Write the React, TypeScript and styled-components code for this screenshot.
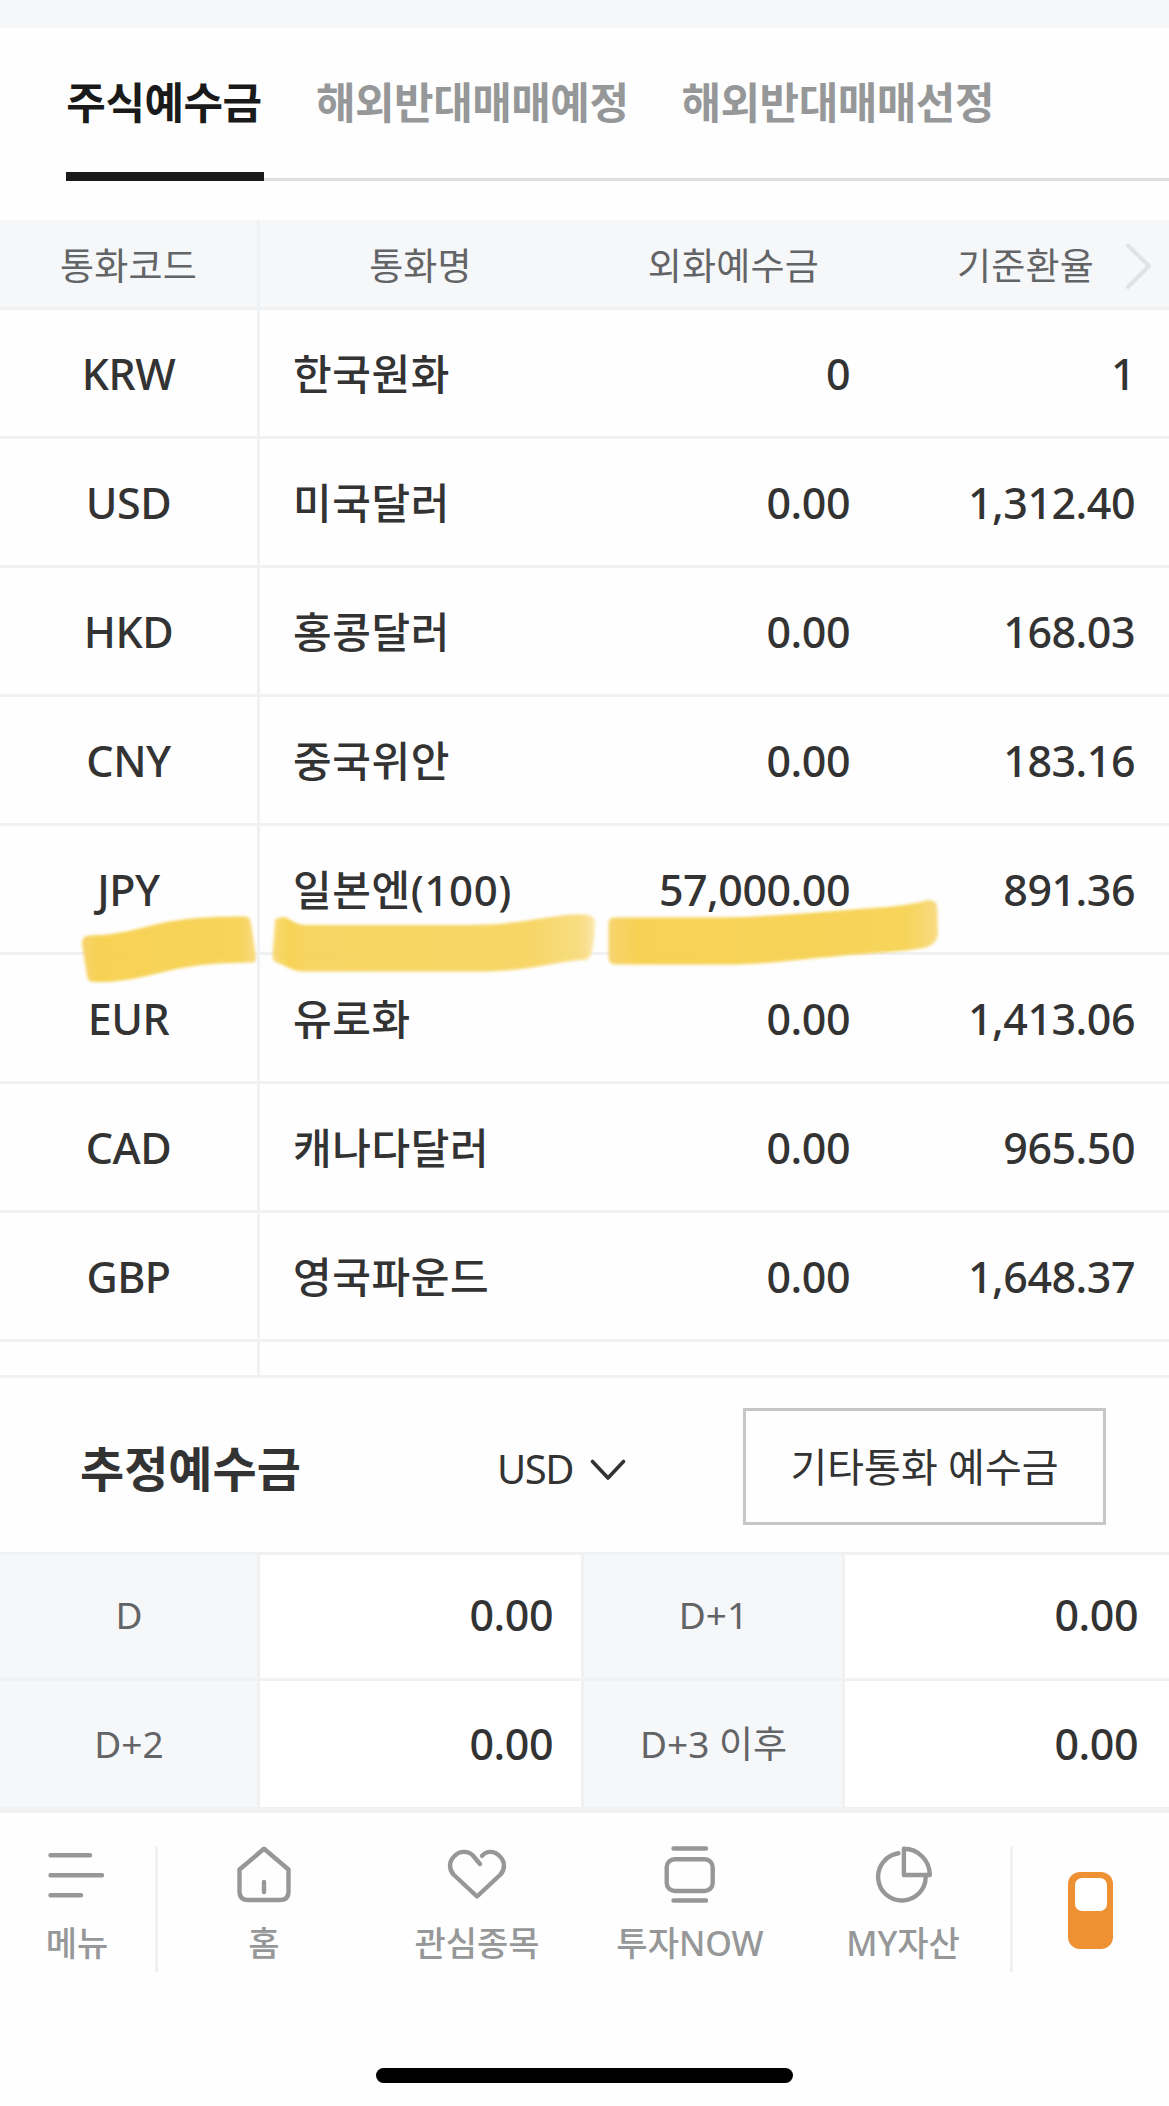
import React from 'react';
import styled, { createGlobalStyle } from 'styled-components';

const GlobalStyle = createGlobalStyle`
  * { box-sizing: border-box; }
  body {
    margin: 0;
    background: #fefefe;
    color: #333333;
    font-family: "Noto Sans", "Noto Sans CJK KR", sans-serif;
  }
  button { font-family: inherit; color: inherit; background: none; border: 0; padding: 0; }
`;

const line = '#f0f1f3';
const tint = '#f6f7f9';
const muted = '#969798';

const Screen = styled.div`
  width: 1169px;
  height: 2106px;
  display: flex;
  flex-direction: column;
  overflow: hidden;
`;

const TopBand = styled.div`
  height: 28px;
  background: ${tint};
`;

const Tabs = styled.nav`
  display: flex;
  gap: 53px;
  height: 153px;
  margin: 0 0 39px 66px;
  box-shadow: inset 0 -3px 0 #e0e0e0;
`;

const Tab = styled.button<{ $active?: boolean }>`
  height: 153px;
  min-width: 198px;
  padding: 5px 2px 0 0;
  margin-right: -2px;
  display: flex;
  align-items: center;
  justify-content: center;
  border-bottom: 9px solid ${(p) => (p.$active ? '#1a1a1a' : 'transparent')};
  color: ${(p) => (p.$active ? '#1a1a1a' : muted)};
  font-size: 43px;
  font-weight: 700;
  letter-spacing: -0.5px;
  line-height: 60px;
  white-space: nowrap;

  &:first-child { margin-right: -1px; }
`;

const Table = styled.section`
  position: relative;
  height: 1158px;
  border-bottom: 3px solid ${line};
  overflow: hidden;
`;

const TableRow = styled.div`
  display: grid;
  grid-template-columns: 260px 321px 271px 1fr;
  height: 129px;
  border-bottom: 3px solid ${line};
`;

const HeadRow = styled(TableRow)`
  height: 90px;
  background: ${tint};
  color: #636466;
  font-size: 37px;
  letter-spacing: 0.2px;
  line-height: 50px;
`;

const HeadCell = styled.div<{ $first?: boolean }>`
  display: flex;
  align-items: center;
  justify-content: center;
  padding-top: 4px;
  border-right: ${(p) => (p.$first ? `3px solid ${line}` : '0')};
`;

const HeadAmount = styled(HeadCell)`
  justify-content: flex-end;
  padding-right: 33px;
`;

const HeadRate = styled(HeadCell)`
  justify-content: flex-end;
  gap: 30px;
  padding-right: 17px;
`;

const Cell = styled.div`
  display: flex;
  align-items: center;
  font-size: 43px;
  font-weight: 500;
  letter-spacing: -0.5px;
  line-height: 56px;
  white-space: nowrap;
`;

const CodeCell = styled(Cell)`
  justify-content: center;
  padding-top: 1px;
  border-right: 3px solid ${line};
`;

const NameCell = styled(Cell)`
  padding: 2px 0 0 33px;
  font-size: 42px;
  letter-spacing: 0.6px;
`;

const NumberCell = styled(Cell)<{ $inset: number }>`
  justify-content: flex-end;
  padding: 1px ${(p) => p.$inset}px 0 0;
`;

const Highlighter = styled.svg`
  position: absolute;
  left: 0;
  top: 661px;
  pointer-events: none;
`;

const Summary = styled.section`
  display: flex;
  align-items: center;
  height: 177px;
  padding: 0 63px 0 80px;
  border-bottom: 3px solid ${line};
`;

const SummaryTitle = styled.h2`
  margin: 0;
  padding-top: 8px;
  width: 417px;
  font-size: 48px;
  font-weight: 700;
  line-height: 64px;
`;

const CurrencySelect = styled.button`
  display: flex;
  align-items: center;
  gap: 17px;
  width: 246px;
  padding-top: 7px;
  font-size: 40px;
  letter-spacing: -1.5px;
  line-height: 54px;
`;

const OtherButton = styled.button`
  width: 363px;
  height: 117px;
  margin-top: 3px;
  border: 3px solid #c5c6c8;
  font-size: 40px;
  line-height: 54px;
  white-space: nowrap;
`;

const Estimates = styled.section`
  display: grid;
  grid-template-columns: 260px 321px 264px 1fr;
  grid-template-rows: 126px 126px;
  height: 258px;
  border-bottom: 6px solid ${line};
`;

const EstimateLabel = styled.div<{ $second?: boolean; $last?: boolean }>`
  display: flex;
  align-items: center;
  justify-content: center;
  padding: 0 0 ${(p) => (p.$last ? 0 : 4)}px 1px;
  background: ${tint};
  border-right: 3px solid ${line};
  border-left: ${(p) => (p.$second ? `3px solid ${line}` : '0')};
  border-bottom: ${(p) => (p.$last ? '0' : `3px solid ${line}`)};
  color: #636466;
  font-size: 37px;
  line-height: 50px;
`;

const EstimateValue = styled(Cell)<{ $last?: boolean; $inset: number }>`
  justify-content: flex-end;
  background: #ffffff;
  padding: 0 ${(p) => p.$inset}px ${(p) => (p.$last ? 0 : 4)}px 0;
  border-bottom: ${(p) => (p.$last ? '0' : `3px solid ${line}`)};
`;

const BottomNav = styled.nav`
  display: grid;
  grid-template-columns: 158px 852px 1fr;
  height: 126px;
  margin-top: 33px;
`;

const NavGroup = styled.div`
  display: grid;
  grid-template-columns: repeat(4, 213px);
`;

const NavItem = styled.button<{ $divided?: boolean }>`
  display: flex;
  flex-direction: column;
  align-items: center;
  gap: 16px;
  padding-right: 1px;
  border-right: ${(p) => (p.$divided ? `3px solid ${line}` : '0')};
  color: ${muted};
  font-size: 34px;
  font-weight: 500;
  line-height: 46px;
  white-space: nowrap;

  svg { flex: none; }
`;

const Remote = styled.div`
  display: flex;
  align-items: flex-start;
  justify-content: center;
  padding: 26px 1px 0 0;
  border-left: 3px solid ${line};
`;

const RemoteBody = styled.div`
  width: 45px;
  height: 77px;
  padding: 6px 6px 0 7px;
  border-radius: 12px;
  background: #ee9133;
`;

const RemoteWindow = styled.div`
  height: 33px;
  border-radius: 7px;
  background: #ffffff;
`;

const HomeIndicator = styled.div`
  width: 417px;
  height: 15px;
  margin: 96px auto 0;
  border-radius: 8px;
  background: #000000;
`;

const Icon = ({ children }: { children: React.ReactNode }) => (
  <svg
    width="62"
    height="58"
    viewBox="0 0 62 58"
    fill="none"
    stroke={muted}
    strokeWidth="4.4"
    strokeLinecap="round"
    strokeLinejoin="round"
  >
    {children}
  </svg>
);

const MenuIcon = () => (
  <Icon>
    <path d="M4.500 9.300H44M4.500 29.200H56M4.500 49.200H35" />
  </Icon>
);

const HomeIcon = () => (
  <Icon>
    <path d="M31 2.800L55.500 23.500V45.500Q55.500 54 47 54H15Q6.500 54 6.500 45.500V23.500Z" />
    <path d="M31 36V46" />
  </Icon>
);

const HeartIcon = () => (
  <Icon>
    <path d="M34 18L28.500 11.500C24 4.500 14 4 8.500 10C2.700 15.500 2.700 23 7.500 28.500L31 50.500L54.500 28.500C59.300 23 59.300 15.500 53.500 10C48.500 4.500 40.500 4.500 36 9.800" />
  </Icon>
);

const WatchIcon = () => (
  <Icon>
    <path d="M14.500 2.500H47M14.500 54.500H47" />
    <rect x="7.700" y="13.200" width="46" height="31.800" rx="8" />
  </Icon>
);

const PieIcon = () => (
  <Icon>
    <path d="M26.500 7.200A23.800 23.800 0 1 0 53.700 31" />
    <path d="M31.900 2.800V29H57.800A26 26.200 0 0 0 31.900 2.800Z" />
  </Icon>
);

const currencies = [
  ['KRW', '한국원화', '0', '1'],
  ['USD', '미국달러', '0.00', '1,312.40'],
  ['HKD', '홍콩달러', '0.00', '168.03'],
  ['CNY', '중국위안', '0.00', '183.16'],
  ['JPY', '일본엔(100)', '57,000.00', '891.36'],
  ['EUR', '유로화', '0.00', '1,413.06'],
  ['CAD', '캐나다달러', '0.00', '965.50'],
  ['GBP', '영국파운드', '0.00', '1,648.37'],
];

const navItems = [
  { label: '홈', icon: <HomeIcon /> },
  { label: '관심종목', icon: <HeartIcon /> },
  { label: '투자NOW', icon: <WatchIcon /> },
  { label: 'MY자산', icon: <PieIcon /> },
];

export default function App() {
  return (
    <Screen>
      <GlobalStyle />
      <TopBand />
      <Tabs>
        <Tab $active>주식예수금</Tab>
        <Tab>해외반대매매예정</Tab>
        <Tab>해외반대매매선정</Tab>
      </Tabs>

      <Table>
        <HeadRow>
          <HeadCell $first>통화코드</HeadCell>
          <HeadCell>통화명</HeadCell>
          <HeadAmount>외화예수금</HeadAmount>
          <HeadRate>
            기준환율
            <svg width="28" height="48" viewBox="0 0 28 48" fill="none" stroke="#e1e2e4" strokeWidth="4" strokeLinecap="round" strokeLinejoin="round">
              <path d="M4 3.500L25 24L4 45" />
            </svg>
          </HeadRate>
        </HeadRow>
        {currencies.map(([code, name, amount, rate]) => (
          <TableRow key={code}>
            <CodeCell>{code}</CodeCell>
            <NameCell>{name}</NameCell>
            <NumberCell $inset={2}>{amount}</NumberCell>
            <NumberCell $inset={34}>{rate}</NumberCell>
          </TableRow>
        ))}
        <TableRow>
          <CodeCell />
        </TableRow>
        <Highlighter width="960" height="110" viewBox="0 880 960 110">
          <defs>
            <filter id="soft" x="-5%" y="-10%" width="110%" height="120%">
              <feGaussianBlur stdDeviation="1.600" />
            </filter>
            <linearGradient id="inkA" x1="0" x2="1">
              <stop offset="0" stopColor="#f7d36b" />
              <stop offset="0.090" stopColor="#f7d04f" />
              <stop offset="0.900" stopColor="#f7d355" />
              <stop offset="1" stopColor="#f8da7e" />
            </linearGradient>
            <linearGradient id="inkB" x1="0" x2="1">
              <stop offset="0" stopColor="#f8d975" />
              <stop offset="0.050" stopColor="#f7d250" />
              <stop offset="0.120" stopColor="#f7d45f" />
              <stop offset="0.800" stopColor="#f7d563" />
              <stop offset="0.960" stopColor="#f8dc80" />
              <stop offset="1" stopColor="#fbe8ad" />
            </linearGradient>
          </defs>
          <g filter="url(#soft)" opacity="0.970">
            <path
              fill="url(#inkA)"
              d="M89 934.500C98 934 106 934 115 932.500C137 929 150 924 172 920C198 916 222 915.500 246 915.500Q250 916 251 922L256 956Q257 961.500 252 961.500C228 962 205 962 172 969C150 974 126 981 102 981H93Q88 981 87 975L82 944Q81 935 89 934.500Z"
            />
            <path
              fill="url(#inkB)"
              d="M275 920Q275 917 279 917Q283 915 287 917Q297 923.500 304 924H459C510 924 520 920 555 915.500Q578 912 588 914Q595 915 595 922Q595 940 591 954Q589 959 582 959C552 961 530 970.500 478 970.500H304Q296 970.500 287 966L276 961Q272.500 960 272.500 955Z"
            />
            <path
              fill="url(#inkA)"
              d="M614 916.500H722C770 916 830 910 880 906.500C900 905 915 903 926 899.500Q936 898 937 905L938 933Q937 943 926 946.500C900 952 860 952 830 956C790 959 770 963.500 722 963.500H615Q609 963.500 608.500 957V922Q609 916.500 614 916.500Z"
            />
          </g>
        </Highlighter>
      </Table>

      <Summary>
        <SummaryTitle>추정예수금</SummaryTitle>
        <CurrencySelect>
          USD
          <svg width="36" height="24" viewBox="0 0 36 24" fill="none" stroke="#333333" strokeWidth="3.600" strokeLinecap="round" strokeLinejoin="round">
            <path d="M2.500 4.500L18 21L33.500 4.500" />
          </svg>
        </CurrencySelect>
        <OtherButton>기타통화 예수금</OtherButton>
      </Summary>

      <Estimates>
        <EstimateLabel>D</EstimateLabel>
        <EstimateValue $inset={28}>0.00</EstimateValue>
        <EstimateLabel $second>D+1</EstimateLabel>
        <EstimateValue $inset={31}>0.00</EstimateValue>
        <EstimateLabel $last>D+2</EstimateLabel>
        <EstimateValue $last $inset={28}>0.00</EstimateValue>
        <EstimateLabel $second $last>D+3 이후</EstimateLabel>
        <EstimateValue $last $inset={31}>0.00</EstimateValue>
      </Estimates>

      <BottomNav>
        <NavItem $divided>
          <MenuIcon />
          메뉴
        </NavItem>
        <NavGroup>
          {navItems.map((item) => (
            <NavItem key={item.label}>
              {item.icon}
              {item.label}
            </NavItem>
          ))}
        </NavGroup>
        <Remote>
          <RemoteBody>
            <RemoteWindow />
          </RemoteBody>
        </Remote>
      </BottomNav>
      <HomeIndicator />
    </Screen>
  );
}
